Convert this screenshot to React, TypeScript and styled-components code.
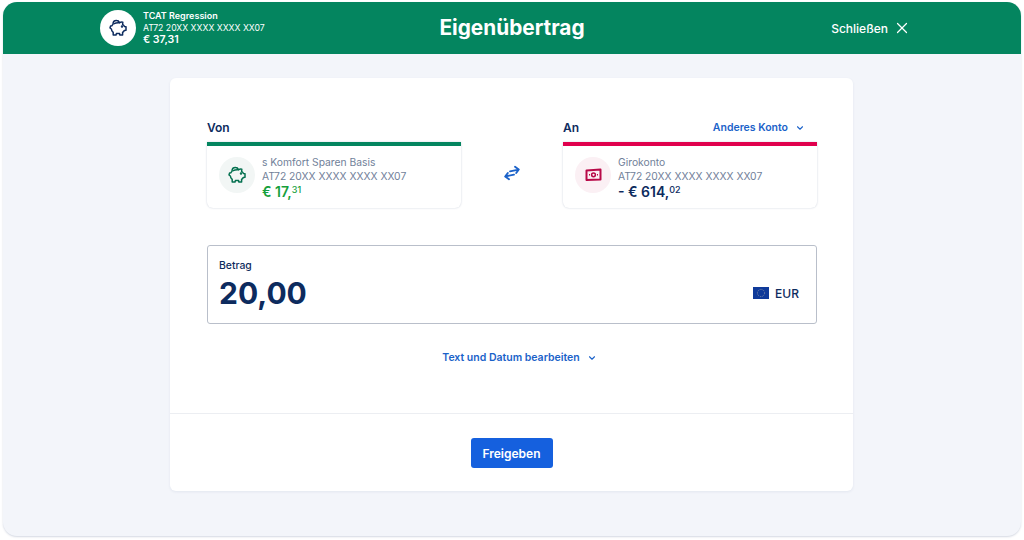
import React from "react";
import styled, { createGlobalStyle } from "styled-components";
import { ChevronDown, X } from "lucide-react";

const Global = createGlobalStyle`
  html, body { margin: 0; padding: 0; background: #fff; }
  body { width: 1024px; height: 540px; overflow: hidden; font-family: Inter, "Liberation Sans", sans-serif; color: #0d2b5e; }
  * { box-sizing: border-box; }
`;

const Page = styled.div`
  padding: 2px 3px 4px;
  height: 540px;
`;
const Win = styled.div`
  height: 534px;
  border-radius: 14px;
  overflow: hidden;
  background: #f3f5fa;
  box-shadow: 0 1px 2px rgba(40, 60, 110, 0.2);
  display: flex;
  flex-direction: column;
`;
const Header = styled.header`
  height: 52px;
  flex: none;
  background: #04855f;
  color: #fff;
  display: grid;
  grid-template-columns: 1fr auto 1fr;
  align-items: center;
  padding: 0 97px;
`;
const Account = styled.div`
  display: flex;
  align-items: center;
  gap: 7px;
`;
const Avatar = styled.div`
  width: 36px;
  height: 36px;
  border-radius: 50%;
  background: #fff;
  color: #0d2b5e;
  display: flex;
  align-items: center;
  justify-content: center;
`;
const AccountText = styled.div`
  display: flex;
  flex-direction: column;
`;
const AccountName = styled.div`
  font-size: 9px;
  font-weight: 600;
  line-height: 12px;
`;
const AccountIban = styled.div`
  font-size: 8.7px;
  line-height: 12px;
  font-weight: 400;
`;
const AccountBalance = styled.div`
  font-size: 10.6px;
  font-weight: 600;
  line-height: 12px;
`;
const Title = styled.h1`
  margin: 0;
  font-size: 20.8px;
  line-height: 24px;
  font-weight: 700;
`;
const Close = styled.div`
  justify-self: end;
  display: flex;
  align-items: center;
  gap: 5px;
  padding-right: 13px;
  font-size: 12px;
  font-weight: 500;
`;
const Main = styled.main`
  flex: 1;
  padding: 24px 168px 44px 167px;
`;
const Card = styled.section`
  height: 413px;
  background: #fff;
  border-radius: 6px;
  box-shadow: 0 1px 3px rgba(40, 60, 110, 0.08);
  display: flex;
  flex-direction: column;
`;
const Body = styled.div`
  height: 336px;
  flex: none;
  padding: 41px 36px 0 37px;
  border-bottom: 1px solid #eceef2;
`;
const Accounts = styled.div`
  display: grid;
  grid-template-columns: 254px 1fr 254px;
`;
const Col = styled.div`
  display: flex;
  flex-direction: column;
`;
const ColHead = styled.div`
  height: 23px;
  display: flex;
  justify-content: space-between;
  align-items: flex-start;
  padding-right: 12px;
`;
const ColLabel = styled.div`
  font-size: 12px;
  font-weight: 600;
  line-height: 18px;
`;
const Link = styled.div`
  display: flex;
  align-items: center;
  gap: 7px;
  color: #1b62c9;
  font-size: 10.5px;
  font-weight: 600;
  line-height: 18px;
`;
const Box = styled.div<{ $bar: string }>`
  height: 66px;
  border-top: 4px solid ${(p) => p.$bar};
  border-radius: 0 0 6px 6px;
  box-shadow: 0 0 2px rgba(30, 50, 100, 0.24);
  display: flex;
  align-items: flex-start;
  gap: 7px;
  padding: 9px 0 0 12px;
`;
const Round = styled.div<{ $bg: string; $fg: string }>`
  width: 36px;
  height: 36px;
  margin-top: 2px;
  border-radius: 50%;
  background: ${(p) => p.$bg};
  color: ${(p) => p.$fg};
  display: flex;
  align-items: center;
  justify-content: center;
`;
const BoxText = styled.div`
  display: flex;
  flex-direction: column;
  color: #717f99;
  font-size: 10.3px;
  line-height: 14px;
`;
const Amount = styled.div<{ $color: string }>`
  color: ${(p) => p.$color};
  font-size: 14px;
  font-weight: 600;
  line-height: 18px;
`;
const Cents = styled.sup`
  font-size: 9px;
  line-height: 0;
  vertical-align: 4px;
  font-weight: 500;
`;
const Swap = styled.div`
  display: flex;
  align-items: center;
  justify-content: center;
  color: #1b62c9;
  padding-top: 19px;
`;
const AmountField = styled.div`
  margin-top: 37px;
  height: 79px;
  border: 1px solid #b9bfca;
  border-radius: 3px;
  padding: 14px 17px 0 11px;
  display: flex;
  justify-content: space-between;
`;
const FieldLabel = styled.div`
  font-size: 10.4px;
  font-weight: 500;
  line-height: 12px;
`;
const FieldValue = styled.div`
  font-size: 30px;
  font-weight: 700;
  line-height: 38px;
  margin-top: 2px;
`;
const Currency = styled.div`
  display: flex;
  align-items: center;
  gap: 6px;
  font-size: 12px;
  font-weight: 500;
  margin-top: 18px;
  height: 30px;
`;
const EditRow = styled.div`
  margin-top: 25px;
  padding-left: 15px;
  display: flex;
  justify-content: center;
`;
const Footer = styled.div`
  flex: 1;
  display: flex;
  justify-content: center;
  padding-top: 24px;
`;
const Button = styled.button`
  width: 82px;
  height: 30px;
  border: none;
  border-radius: 3px;
  background: #1560de;
  color: #fff;
  font-family: inherit;
  font-size: 12px;
  font-weight: 600;
`;

const Piggy = ({ size = 20 }: { size?: number }) => (
  <svg width={size} height={size} viewBox="0 0 20 20" fill="none" stroke="currentColor" strokeWidth="1.5" strokeLinejoin="round" strokeLinecap="round">
    <path d="M5 6.2 C5 4 6.6 2.6 8.4 2.6 C10 2.6 11 3.4 11.6 4.6 C12.4 4.2 13.6 4 14.8 4.2 L14.6 6.4 C15.6 7 16.2 7.8 16.5 8.6 L18 8.8 L18 12.2 L16.2 12.6 C15.8 13.4 15.2 14 14.6 14.4 L14.6 17 L11.8 17 L11.6 15.6 L8.4 15.6 L8 17 L5.2 17 L5.2 14.4 C4.2 13.6 3.4 12.4 3.4 11 L2 10 L2.6 8 L3.8 7.8 C4.2 7.2 4.6 6.6 5 6.2 Z" />
    <path d="M6.2 5.6 C7.8 4.8 9.6 4.6 11.6 4.8" />
    <circle cx="14" cy="8.6" r="0.5" fill="currentColor" />
  </svg>
);
const Note = () => (
  <svg width="17" height="14" viewBox="0 0 17 14" fill="none" stroke="currentColor">
    <path d="M1.5 2.6 L15.5 1.6 V11.4 L1.5 12 Z" strokeWidth="2" strokeLinejoin="round" />
    <circle cx="8.5" cy="6.8" r="1.9" strokeWidth="1.5" />
    <path d="M4 6.8 H5 M12 6.8 H13" strokeWidth="1.5" />
  </svg>
);
const SwapIcon = () => (
  <svg width="18" height="16" viewBox="0 0 18 16" fill="none" stroke="currentColor" strokeWidth="1.9" strokeLinecap="round" strokeLinejoin="round">
    <path d="M7 6.4 L15.6 4.6 M12 1.8 L15.8 4.5 L13.2 8" />
    <path d="M11 9.6 L2.4 11.4 M6 14.2 L2.2 11.5 L4.8 8" />
  </svg>
);
const EuFlag = () => (
  <svg width="16" height="12" viewBox="0 0 16 12">
    <rect width="16" height="12" fill="#0f3a9a" />
    <circle cx="8" cy="6" r="3.6" fill="none" stroke="#8d95a8" strokeWidth="0.9" strokeDasharray="0.9 1" />
  </svg>
);

export default function App() {
  return (
    <>
      <Global />
      <Page>
        <Win>
          <Header>
            <Account>
              <Avatar><Piggy /></Avatar>
              <AccountText>
                <AccountName>TCAT Regression</AccountName>
                <AccountIban>AT72 20XX XXXX XXXX XX07</AccountIban>
                <AccountBalance>€ 37,31</AccountBalance>
              </AccountText>
            </Account>
            <Title>Eigenübertrag</Title>
            <Close>Schließen <X size={18} strokeWidth={1.6} /></Close>
          </Header>
          <Main>
            <Card>
              <Body>
                <Accounts>
                  <Col>
                    <ColHead><ColLabel>Von</ColLabel></ColHead>
                    <Box $bar="#04855f">
                      <Round $bg="#f2f6f5" $fg="#04704f"><Piggy /></Round>
                      <BoxText>
                        s Komfort Sparen Basis
                        <br />
                        AT72 20XX XXXX XXXX XX07
                        <Amount $color="#16a03c">€ 17,<Cents>31</Cents></Amount>
                      </BoxText>
                    </Box>
                  </Col>
                  <Swap><SwapIcon /></Swap>
                  <Col>
                    <ColHead>
                      <ColLabel>An</ColLabel>
                      <Link>Anderes Konto <ChevronDown size={10} strokeWidth={2.6} /></Link>
                    </ColHead>
                    <Box $bar="#e0004d">
                      <Round $bg="#fbf0f4" $fg="#b80a48"><Note /></Round>
                      <BoxText>
                        Girokonto
                        <br />
                        AT72 20XX XXXX XXXX XX07
                        <Amount $color="#0d2b5e">- € 614,<Cents>02</Cents></Amount>
                      </BoxText>
                    </Box>
                  </Col>
                </Accounts>
                <AmountField>
                  <div>
                    <FieldLabel>Betrag</FieldLabel>
                    <FieldValue>20,00</FieldValue>
                  </div>
                  <Currency><EuFlag /> EUR</Currency>
                </AmountField>
                <EditRow>
                  <Link>Text und Datum bearbeiten <ChevronDown size={10} strokeWidth={2.6} /></Link>
                </EditRow>
              </Body>
              <Footer>
                <Button>Freigeben</Button>
              </Footer>
            </Card>
          </Main>
        </Win>
      </Page>
    </>
  );
}
